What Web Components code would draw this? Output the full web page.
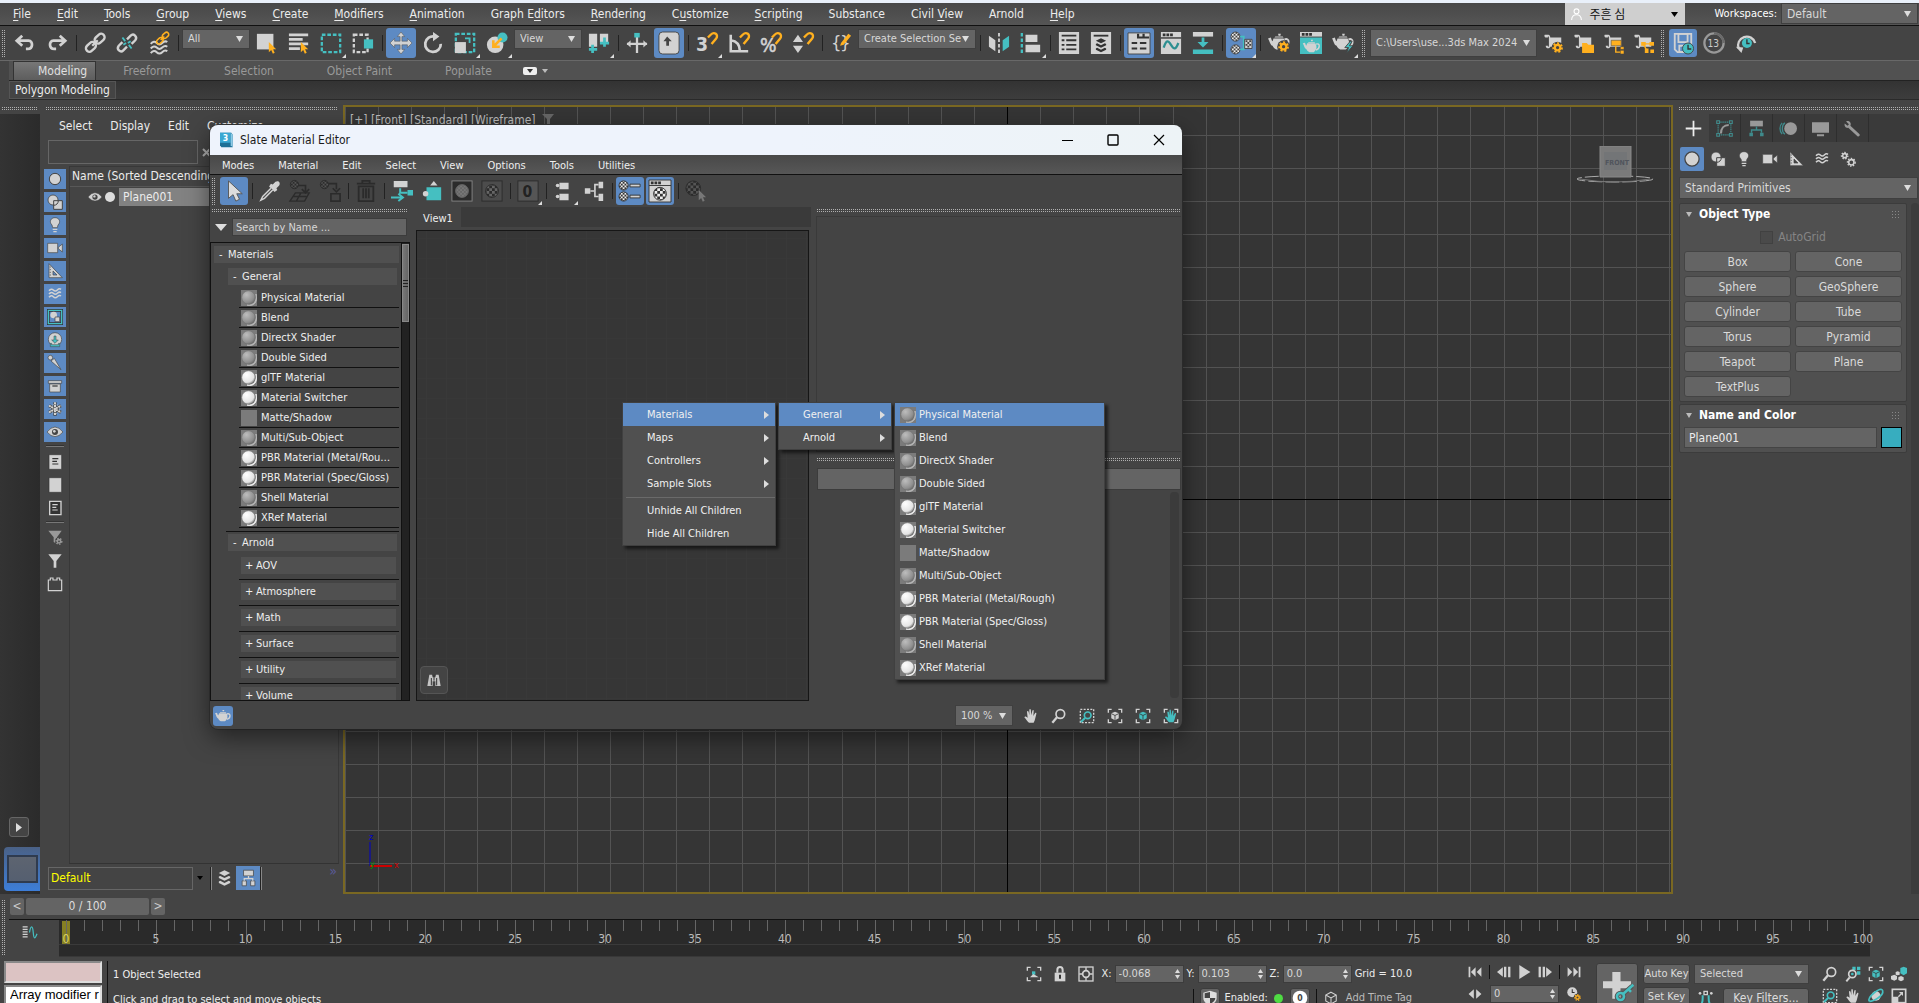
<!DOCTYPE html>
<html lang="en">
<head>
<meta charset="utf-8">
<title>3ds Max 2024</title>
<style>
  html, body { margin: 0; height: 100%; overflow: hidden; background: #444; }
  body {
    font: 12px/16px "DejaVu Sans Condensed", "Noto Sans", "Noto Sans CJK KR", sans-serif;
    color: #ececec;
    --blue: #5d8ac3; --field: #646464;
  }
</style>
</head>
<body>
<max-app></max-app>
<script>
const BASE = `
  *,*::before,*::after{box-sizing:border-box}
  :host{box-sizing:border-box}
  button,input,select{font:inherit;color:inherit;margin:0;padding:0;border:0;background:none;border-radius:0;outline:0;min-width:0}
  button{display:block;text-align:inherit}
  select{appearance:none}
  a{color:inherit;text-decoration:none}
  .dots{height:3px;background:repeating-linear-gradient(transparent 0 1px,#444 1px 2px),repeating-linear-gradient(90deg,#b0b0b0 0 1px,#444 1px 2px)}
`;
function define(tag, css, html) {
  customElements.define(tag, class extends HTMLElement {
    connectedCallback() {
      if (this.shadowRoot) return;
      const root = this.attachShadow({ mode: 'open' });
      root.innerHTML = `<style>${BASE}${css}</style>` + (typeof html === 'function' ? html(this) : html);
    }
  });
}

/* ---------- icons, 24 x 24 ---------- */
const W = '#d2d2d2', T = '#45bfc1', O = '#ffb01f', D = '#333';
const checks = (id, cx, cy, r, a, b, s = 2) =>
  `<defs><pattern id="${id}" width="${2 * s}" height="${2 * s}" patternUnits="userSpaceOnUse"><rect width="${2 * s}" height="${2 * s}" fill="${b}"/><path d="M0 0h${s}v${s}H0zM${s} ${s}h${s}v${s}H${s}z" fill="${a}"/></pattern></defs><circle cx="${cx}" cy="${cy}" r="${r}" fill="url(#${id})" stroke="${b}"/>`;
const gear = (cx, cy, r, c) => `<circle cx="${cx}" cy="${cy}" r="${r}" fill="none" stroke="${c}" stroke-width="2.4"/><circle cx="${cx}" cy="${cy}" r="${r + 1.8}" fill="none" stroke="${c}" stroke-width="2" stroke-dasharray="2.2 2.1"/>`;
const cursor = (x, y, c) => `<path transform="translate(${x} ${y})" d="M0 0v11l2.6-2.4 1.8 4 2-.9-1.8-3.9H8z" fill="${c}"/>`;
const magnet = `<path d="M13 6l3-3c4-4 9 0 6 4l-5 6" fill="none" stroke="${O}" stroke-width="2.6"/>`;
const link = c => `<g fill="none" stroke="${c}" stroke-width="2.6"><rect x="11" y="3.5" width="12" height="7.5" rx="3.7" transform="rotate(-42 17 7.2)"/><rect x="1.5" y="12.5" width="12" height="7.5" rx="3.7" transform="rotate(-42 7.5 16.2)"/><path d="M9 15l6-6"/></g>`;
const pot = (c, s = '') => `<g ${s}><path d="M6 8h11c3 4 2 9-2 12H9c-2-1-3-2-4-4-3-1-3-5-5-8l3-1c1 2 1 4 2 4zM8 6h8l1 1H7zM11 3h3l-.5 2h-2z" fill="${c}"/><path d="M18 9c6-2 6 6 0 8" fill="none" stroke="${c}" stroke-width="2"/></g>`;
const waves = c => `<path d="M3 7q3.5-4 6.5-1t6 0T21 5M3 12q3.5-4 6.5-1t6 0 5.5-1M3 17q3.5-4 6.5-1t6 0 5.5-1" fill="none" stroke="${c}" stroke-width="2.2"/>`;
const layers = c => `<g fill="${c}"><path d="M12 1l8 4-8 4-8-4z"/><path d="M4 10l2-1 6 3 6-3 2 1v2l-8 4-8-4z"/><path d="M4 17l2-1 6 3 6-3 2 1v2l-8 4-8-4z"/></g>`;
const brackets = `<path d="M2 7V2h5M17 2h5v5M22 17v5h-5M7 22H2v-5" fill="none" stroke="${W}" stroke-width="2"/>`;
const hand = c => `<path d="M9 22c-3-2-4-5-7-8 1-2 3-1 5 1L6 6c0-2 2-2 2.5 0l1 5V3c0-2 2-2 2.3 0l.5 8L14 4c.5-1.5 2.3-1 2 .7L15.5 12 18 8c1-1.5 2.5-.5 2 1l-2 8c-.5 2-1 3-2 5z" fill="${c}"/>`;
const cube = (c, k = D) => `<path d="M12 4l7 3v9l-7 4-7-4V7z" fill="${c}"/><path d="M5 7.5l7 3.5 7-3.5M12 11v9" fill="none" stroke="${k}" stroke-width="1.5"/>`;
const scroll = `<path d="M3 3h4c1 0 2 1 2 3H21v10H9c-1 3-5 2-5-1h3V6H4c-1 0-2-2-1-3z" fill="${W}"/><path d="M7 5v11" stroke="#444"/>`;
const ICONS = {
  undo: `<path d="M9 4L3 9.5 9 15M4 9.5h12c5 0 5 9-1 9h-2" fill="none" stroke="${W}" stroke-width="3"/>`,
  redo: `<path d="M15 4l6 5.5-6 5.5M20 9.5H8c-5 0-5 9 1 9h2" fill="none" stroke="${W}" stroke-width="3"/>`,
  link: link(W),
  unlink: `<g fill="none" stroke="${W}" stroke-width="2.6"><path d="M12 8l4-4c3-3 8 1 5 5l-4 4M12 16l-4 4c-3 3-8-1-5-5l4-4"/></g><path d="M7 6l3 4M17 18l-3-4M8 14l3-2M13 12l3-2" stroke="${T}" stroke-width="2"/>`,
  bind: `<g transform="translate(0 6)">${waves(W)}</g><g transform="translate(8 -1) scale(.65)">${link(O)}</g>`,
  select: `<path d="M1 2h18v17H1z" fill="${W}"/>${cursor(14, 11, O)}`,
  selname: `<path d="M1 3h21M1 8h15M1 13h21M1 18h12" stroke="${W}" stroke-width="3"/>${cursor(14, 11, O)}`,
  region: `<rect x="2" y="3" width="20" height="19" fill="none" stroke="${T}" stroke-width="2.5" stroke-dasharray="4 2"/>`,
  crossing: `<rect x="2" y="3" width="15" height="19" fill="none" stroke="${W}" stroke-width="2.5" stroke-dasharray="4 2"/><path d="M13 8h10v10H13z" fill="${T}"/>`,
  move: `<path d="M12 0l4 5h-3v5h6V7l5 5-5 5v-3h-6v5h3l-4 5-4-5h3v-5H5v3l-5-5 5-5v3h6V5H8z" fill="${W}" stroke="#555" stroke-width=".6"/>`,
  rotate: `<path d="M14 5A8.5 8.5 0 1 0 20.5 13" fill="none" stroke="${W}" stroke-width="3"/><path d="M12 0v10l7-5z" fill="${W}"/>`,
  scale: `<rect x="2" y="2" width="20" height="20" fill="none" stroke="${T}" stroke-width="2.5" stroke-dasharray="4 2"/><path d="M1 11h12v12H1z" fill="${W}"/><path d="M12 7h5v5" fill="none" stroke="${T}" stroke-width="2"/>`,
  place: `<circle cx="10" cy="14" r="9" fill="${W}"/><circle cx="18" cy="6" r="5.5" fill="${T}"/><path d="M17 7L9 15M8 9v7h7" fill="none" stroke="${O}" stroke-width="2.8"/>`,
  pivot: `<path d="M1 2h9v14H1zM13 2h9v9h-9z" fill="${W}"/><path d="M5 14v9M1 19h9M18 6v10M13 12h10" stroke="${T}" stroke-width="3"/>`,
  manip: `<path d="M12 5v18M1 13h22" stroke="${W}" stroke-width="2.5"/><path d="M9 1h6v5H9z" fill="${T}"/><path d="M5 9l-4 4 4 4zM19 9l4 4-4 4z" fill="${W}"/>`,
  keyb: `<rect x="1" y="0" width="22" height="24" rx="4" fill="${W}" stroke="#444"/><path d="M10 5l5 5h-3v5H9v-5H6z" fill="#444"/>`,
  snap: `<text x="0" y="21" font-size="21" font-weight="700" fill="${W}">3</text>${magnet}`,
  angle: `<path d="M3 3v18h19M3 9c7 1 10 5 10 12" fill="none" stroke="${W}" stroke-width="2.8"/>${magnet}`,
  percent: `<text x="0" y="22" font-size="21" fill="${W}" stroke="${W}" stroke-width=".6">%</text>${magnet}`,
  spin: `<path d="M1 11l5.5-8 5.5 8zM1 15h11l-5.5 8z" fill="${W}"/>${magnet}`,
  braces: `<text x="1" y="19" font-size="20" fill="${W}">{</text><text x="11" y="19" font-size="20" fill="${W}">}</text><path d="M12 12l8-10 3 2-8 10-4 1z" fill="${O}"/>`,
  mirror: `<path d="M1 4l7 5v12l-7-5z" fill="${W}"/><path d="M23 4l-7 5v12l7-5z" fill="${T}"/><path d="M12 1v22" stroke="${W}" stroke-width="2" stroke-dasharray="4 2"/>`,
  align: `<path d="M2 1v22" stroke="${T}" stroke-width="2.5" stroke-dasharray="4 2"/><path d="M6 3h13v8H6zM6 14h16v8H6z" fill="${W}"/>`,
  list: `<path d="M1 0h22v24H1z" fill="${W}"/><path d="M4 4h16M4 9h3M9 9h11M4 14h3M9 14h11M4 19h3M9 19h11" stroke="${D}" stroke-width="2"/>`,
  layerx: `<path d="M1 0h22v24H1z" fill="${W}"/><path d="M4 4h16" stroke="${D}" stroke-width="2"/><g transform="translate(3.6 6) scale(.7)">${layers(D)}</g>`,
  ribbon: `<path d="M0 1h24v23H0z" fill="${W}" stroke="#444"/><path d="M11 2v4h6V2M17 6h6M4 12h6M13 12h7M4 18h6M13 18h7" stroke="#333" stroke-width="2.4" fill="none"/>`,
  curve: `<path d="M1 0h22v24H1z" fill="${W}"/><path d="M3 1.5h3v3H3zM7 1.5h3v3H7zM11 1.5h3v3h-3z" fill="${D}"/><path d="M1 6.5h22" stroke="${D}" stroke-width="1.5"/><path d="M4 17c3-9 5-8 8-3s5 6 8-2" fill="none" stroke="#2d8f91" stroke-width="2.5"/>`,
  schem: `<path d="M1 0h22v5H1z" fill="${W}"/><path d="M1 19h22v5H1zM10.5 6h3v5H18l-6 6-6-6h4.5z" fill="${T}"/>`,
  slate: checks('a', 6, 5, 5, '#eee', '#444') + checks('b', 6, 19, 5, '#eee', '#444') + `<path d="M11 5h4v8h3M11 19h4v-6" fill="none" stroke="${T}" stroke-width="2"/>` + `<path d="M16 8h8v10h-8z" fill="${W}" stroke="#444"/><path d="M17 9h2v2h-2zM21 9h2v2h-2zM19 11h2v2h-2zM17 13h2v2h-2zM21 13h2v2h-2zM19 15h2v2h-2z" fill="#444"/>`,
  rsetup: pot(W, 'transform="translate(0 -1)"') + `<circle cx="17" cy="16" r="7" fill="#444"/>` + gear(17, 16, 3, O),
  rframe: `<path d="M0 0h24v5H0z" fill="${W}"/><path d="M2 1h3v3H2zM6 1h3v3H6zM10 1h3v3h-3z" fill="${D}"/><path d="M0 6h24v18H0z" fill="${T}"/>` + pot(W, 'transform="translate(3 6) scale(.8)"'),
  render: pot(W, 'transform="translate(0 -1)"') + `<path d="M20 10l-6 7h4l-2 6 7-8h-4l3-5z" fill="${T}" stroke="#444" stroke-width="1"/>`,
  s1: scroll + `<circle cx="17" cy="17" r="6.5" fill="#444"/>` + gear(17, 17, 3, O),
  s2: scroll + `<path d="M11 12h5l2 2h6v9H11z" fill="${O}"/>`,
  s3: scroll + `<path d="M10 9h11v6H10zM20 16h4v3h-4zM20 20h4v4h-4z" fill="${O}" stroke="#444" stroke-width=".6"/><path d="M15 15v7h5" fill="none" stroke="${O}" stroke-width="1.5"/>`,
  s4: scroll + `<path d="M10 11h5v4h-5zM19 11h5v4h-5zM14 18h4v5h-4zM20 19h4v4h-4z" fill="${O}"/><path d="M14 13h6M13 14l3 6" stroke="${O}" stroke-width="1.5"/>`,
  autosave: `<path d="M3 2h18v20H6l-3-3z" fill="none" stroke="${W}" stroke-width="2"/><path d="M7 2h10v9H7zM8 15h8v7H8z" fill="none" stroke="${W}" stroke-width="2"/><circle cx="17.5" cy="18" r="6" fill="${T}" stroke="#444"/><path d="M17.5 14v4.5H21" fill="none" stroke="#333" stroke-width="1.5"/>`,
  ring: `<circle cx="12" cy="12" r="10.5" fill="none" stroke="#999" stroke-width="2.5"/><path d="M12 1.5a10.5 10.5 0 0 1 10.5 10.5" stroke="#6a6a6a" fill="none" stroke-width="2.5"/><text x="5" y="16" font-size="11" fill="#ccc">13</text>`,
  restore: `<path d="M4 18A9.5 9.5 0 1 1 22 12" fill="none" stroke="${W}" stroke-width="2.5"/><path d="M1 16l8 1-2 6z" fill="${W}"/><circle cx="13" cy="12" r="5.5" fill="${T}"/><path d="M13 8v4.5h3" fill="none" stroke="#333" stroke-width="1.5"/>`,
  user: `<circle cx="12" cy="7" r="4.5" fill="none" stroke="#fff" stroke-width="2"/><path d="M3 23c0-13 18-13 18 0" fill="none" stroke="#fff" stroke-width="2"/>`,
  circle: `<circle cx="12" cy="12" r="8.5" fill="${W}" stroke="#444" stroke-width="1.5"/>`,
  shapes: `<circle cx="9" cy="9" r="7.5" fill="${W}" stroke="#444" stroke-width="1.2"/><path d="M10 10h13v13H10z" fill="${W}" stroke="#444" stroke-width="1.5"/><path d="M10 17c4 0 7-3 7-7" stroke="#444" stroke-width="1.5" fill="none"/>`,
  bulb: `<path d="M12 1c7 0 9 7 4.5 11l-1 4h-7l-1-4C3 8 5 1 12 1z" fill="${W}" stroke="#444"/><path d="M8.5 18.5h7M9.5 22h5" stroke="${W}" stroke-width="2"/>`,
  camera: `<path d="M1 5h15v14H1zM17 11l6-5v12l-6-5z" fill="${W}" stroke="#444"/>`,
  tape: `<path d="M3 1l20 21H3zM9 12v6h6z" fill="${W}" fill-rule="evenodd" stroke="#444"/><path d="M4 6h2M4 10h2M4 14h2M4 18h2" stroke="#444"/>`,
  waves: waves(W),
  group: `<path d="M2 2h20v20H2z" fill="none" stroke="#333" stroke-width="4"/><path d="M2 2h20v20H2z" fill="none" stroke="${T}" stroke-width="2"/><circle cx="10" cy="9" r="5" fill="${W}"/><path d="M12 12h7v7h-7z" fill="${W}" stroke="#444"/>`,
  xref: `<circle cx="12" cy="11" r="10" fill="${W}" stroke="#444"/><path d="M10.5 6h3v6H17l-5 5-5-5h3.5zM5 17v5h14v-5h-2v2H7v-2z" fill="${T}" stroke="#444" stroke-width=".8"/>`,
  bone: `<circle cx="5" cy="4" r="3.5" fill="${W}" stroke="#444"/><path d="M6 9l5-4 10 17z" fill="${W}" stroke="#444"/>`,
  box: `<path d="M2 4h20v4H2zM4 9h16v12H4z" fill="${W}" stroke="#444"/><path d="M8 12h8" stroke="#444" stroke-width="2"/>`,
  frozen: `<g stroke="#444" stroke-width="5"><path d="M12 2v20M3 7l18 10M3 17L21 7"/></g><g stroke="${W}" stroke-width="3" stroke-dasharray="3 1"><path d="M12 2v20M3 7l18 10M3 17L21 7"/></g><circle cx="12" cy="12" r="7" fill="none" stroke="${W}" stroke-dasharray="2 1.5"/>`,
  eye: `<path d="M0 12q12-15 24 0-12 14-24 0z" fill="${W}" stroke="#444"/><circle cx="12" cy="12" r="4.5" fill="#444"/><circle cx="11" cy="11" r="2" fill="${W}"/>`,
  page: `<path d="M3 1h19v22H3z" fill="${W}" stroke="#333"/><path d="M8 7h9M8 11h7M8 15h9" stroke="${D}" stroke-width="1.8"/>`,
  page0: `<path d="M3 1h19v22H3z" fill="${W}" stroke="#333"/>`,
  page1: `<path d="M4 2h17v20H4z" fill="#333" stroke="${W}" stroke-width="2"/><path d="M8 7h8M8 11h6M8 15h8" stroke="${W}" stroke-width="1.8"/>`,
  filterg: `<path d="M2 1h20l-7 10v10l-5-3v-7z" fill="#999"/><circle cx="18" cy="17" r="6" fill="#444"/>` + gear(18, 17, 2.5, '#999'),
  filter: `<path d="M2 2h20l-8 10v10h-4V12z" fill="${W}"/>`,
  brick: `<path d="M2 6h3V3h4v3h6V3h4v3h3v16H2z" fill="none" stroke="${W}" stroke-width="1.8"/>`,
  layers: layers(W),
  hier: `<path d="M5 1h14v8H5zM3 16h6v7H3zM15 16h6v7h-6z" fill="${W}" stroke="#444"/><path d="M12 9v4M6 16v-3h12v3" fill="none" stroke="${W}" stroke-width="1.8"/>`,
  logo: `<path d="M3 1h17l2 3v19H5l-2-3z" fill="#1d6f96"/><path d="M3 1h16v15H3z" fill="#3aa7d2"/><path d="M19 1l3 3v19l-3-3z" fill="#8ecae6"/><text x="7" y="14" font-size="13" font-weight="700" fill="#fff">3</text>`,
  min: `<path d="M7 12.5h11" stroke="#000" stroke-width="1.2"/>`,
  max: `<rect x="7" y="7" width="10" height="10" rx="1" fill="none" stroke="#000" stroke-width="1.4"/>`,
  close: `<path d="M7 7l10 10M17 7L7 17" stroke="#000" stroke-width="1.2"/>`,
  arrow: `<path d="M6 1v19l5-4 3 7 4-2-3-6h6z" fill="#ddd" stroke="#555"/>`,
  dropper: `<path d="M15 5l3-3c3-2 6 1 4 4l-3 3 1 2-3 2-6-6 2-3z" fill="${W}"/><path d="M13 9l-9 9-2 4 4-2 9-9" fill="#555" stroke="${W}" stroke-width="1.5"/>`,
  put: checks('a', 6, 5, 4.5, '#555', '#2b2b2b') + `<path d="M11 6h7v7M14 10l4 4 4-4" fill="none" stroke="#2b2b2b" stroke-width="1.8"/><path d="M7 14h15l-5 9H1zM5 18h14M13 14l-5 9" fill="none" stroke="#2b2b2b" stroke-width="1.5"/>`,
  assign: checks('a', 6, 5, 4.5, '#555', '#2b2b2b') + `<path d="M11 4h8v6M15 9l4 4 4-4M13 15h10v8H13z" fill="none" stroke="#2b2b2b" stroke-width="1.8"/>`,
  trash: `<path d="M2 4h20M8 4V1h8v3M4 7h16v16H4zM9 9v11M12 9v11M15 9v11" fill="none" stroke="#2b2b2b" stroke-width="2"/>`,
  moveKids: `<path d="M3 1h15v7H3z" fill="${W}"/><path d="M18 11h6v6h-6z" fill="${T}"/><path d="M10 9v5h8M0 19h11M8 15l5 4-5 4" fill="none" stroke="${T}" stroke-width="2.2"/>`,
  hide: `<path d="M6 8h16v14H6z" fill="${T}"/><path d="M10 6l4-5 4 5z" fill="${W}"/><circle cx="5" cy="15" r="3" fill="${W}"/>`,
  shade: `<rect x="1" y="1" width="22" height="22" fill="#2b2b2b" stroke="#888"/>` + checks('a', 12, 12, 7, '#777', '#666'),
  bg: `<rect x="1" y="1" width="22" height="22" fill="#4c4c4c" stroke="#2b2b2b"/>` + checks('a', 12, 12, 7, '#666', '#2b2b2b', 3),
  zero: `<rect x="1" y="1" width="22" height="22" fill="#555" stroke="#2b2b2b"/><text x="6" y="18" font-size="17" font-weight="700" fill="#222">0</text>`,
  layAll: `<path d="M7 3h10v7H7zM7 15h10v7H7z" fill="${W}"/><circle cx="5" cy="6" r="2" fill="${W}"/><circle cx="5" cy="18" r="2" fill="${W}"/>`,
  layKid: `<path d="M2 9h6v6H2zM17 2h5v7h-5zM17 15h5v8h-5z" fill="${W}"/><path d="M8 12h4M17 5h-4v13h4" fill="none" stroke="${W}" stroke-width="1.8"/>`,
  browser: checks('a', 5, 6, 5, '#eee', '#333') + checks('b', 5, 18, 5, '#eee', '#333') + `<path d="M12 4.5h11v3H12zM12 16.5h11v3H12z" fill="${W}" stroke="#333"/>`,
  editor: `<path d="M0 0h24v24H0z" fill="${W}" stroke="#333"/><path d="M0 6h24" stroke="#333"/><path d="M2 1.5h3v3H2zM6 1.5h3v3H6zM10 1.5h3v3h-3z" fill="#333"/>` + checks('a', 12, 15, 7, '#eee', '#333', 3),
  pick: checks('a', 9, 9, 8, '#555', '#2b2b2b', 3) + cursor(15, 11, '#777'),
  binoc: `<path d="M5 4h4l1 4h4l1-4h4l3 17h-8v-7h-4v7H2z" fill="#c4c4c4"/><path d="M8 9v11M16 9v11M12 4v9" stroke="#333" stroke-width="1.5"/>`,
  pot: pot(W),
  hand: hand(W),
  zoom: `<circle cx="14" cy="9" r="6.5" fill="none" stroke="${W}" stroke-width="2.5"/><path d="M9 14l-7 8" stroke="${W}" stroke-width="3.5"/>`,
  zregion: `<rect x="2" y="2" width="20" height="20" fill="none" stroke="${W}" stroke-width="2" stroke-dasharray="3 2"/><circle cx="13" cy="11" r="5" fill="#444" stroke="${T}" stroke-width="2.5"/><path d="M9 15l-6 6" stroke="${T}" stroke-width="3"/>`,
  zext: brackets + `<g transform="translate(2.4 2.4) scale(.8)">${cube(W)}</g>`,
  zextsel: brackets + `<g transform="translate(2.4 2.4) scale(.8)">${cube(T)}</g>`,
  panto: brackets + `<g transform="translate(1 1) scale(.92)">${hand(T)}</g>`,
  zall: `<path d="M11 1h5v5h-5zM18 1h5v5h-5zM18 8h5v5h-5z" fill="${T}"/><circle cx="11" cy="12" r="5.5" fill="#444" stroke="${W}" stroke-width="2.5"/><circle cx="11" cy="12" r="2" fill="${T}"/><path d="M7 17l-5 6" stroke="${W}" stroke-width="3"/>`,
  zextall: `<path d="M14 3l5-2 5 2v8l-5 3-5-3z" fill="${T}"/><path d="M0 15l5-2 4 2v5l-4 2-5-2zM11 17l4-2 4 2v4l-4 2-4-2zM7 9l3-1 3 1v4l-3 1-3-1z" fill="${W}"/>`,
  orbit: `<circle cx="12" cy="12" r="7" fill="${W}"/><path d="M2 20C-2 14 20-4 22 4s-14 16-20 16" fill="none" stroke="${T}" stroke-width="2.5"/>`,
  maxv: `<rect x="2" y="2" width="20" height="20" fill="none" stroke="${W}" stroke-width="2.5"/><path d="M2 13h9v9H2zM12 6h6v6z" fill="${W}"/><path d="M17 7l-6 6" stroke="${W}" stroke-width="2"/>`,
  isolate: brackets + `<path d="M9 8h5v5H9z" fill="${T}"/><path d="M6 17l5-5 8 5z" fill="${W}"/>`,
  lock: `<path d="M4 10h16v13H4z" fill="${W}"/><path d="M8 10V6c0-6 8-6 8 0v4" fill="none" stroke="${W}" stroke-width="3"/><path d="M12 13v6" stroke="#333" stroke-width="3"/>`,
  absrel: `<rect x="1.5" y="1.5" width="21" height="21" fill="none" stroke="${W}" stroke-width="2"/><circle cx="12" cy="12" r="5" fill="none" stroke="${W}" stroke-width="2.5"/><path d="M12 2v5M12 17v5M2 12h5M17 12h5" stroke="${W}" stroke-width="2"/>`,
  shield: `<path d="M12 1l10 3v8c0 6-5 9-10 11C7 21 2 18 2 12V4z" fill="#ddd"/><path d="M12 3v9h8c0 4-4 7-8 9v-9H4V5z" fill="#444"/>`,
  oval: `<circle cx="12" cy="12" r="11" fill="#fff"/><text x="8" y="17" font-size="13" font-weight="700" fill="#444">0</text>`,
  cubeo: `<path d="M12 2l9 5v10l-9 5-9-5V7zM3 7l9 5 9-5M12 12v10" fill="none" stroke="${W}" stroke-width="1.8"/>`,
  first: `<path d="M1 3h3v18H1zM13 4v16L5 12zM23 4v16l-8-8z" fill="${W}"/>`,
  prev: `<path d="M10 4v16L0 12zM12 3h4v18h-4zM19 3h4v18h-4z" fill="${W}"/>`,
  play: `<path d="M4 0l19 12L4 24z" fill="${W}"/>`,
  next: `<path d="M14 4v16l10-8zM1 3h4v18H1zM8 3h4v18H8z" fill="${W}"/>`,
  last: `<path d="M20 3h3v18h-3zM11 4v16l8-8zM1 4v16l8-8z" fill="${W}"/>`,
  keymode: `<path d="M10 4v16L1 12zM14 4v16l9-8z" fill="${W}"/>`,
  timecfg: `<circle cx="9" cy="9" r="8.5" fill="${W}"/><path d="M9 4v5.5h4" fill="none" stroke="#333" stroke-width="1.8"/><circle cx="18" cy="18" r="6.5" fill="#444"/>` + gear(18, 18, 3, O),
  setkey: `<path d="M8 0h7v8h9v6h-9v9H8v-9H0V8h8z" fill="${W}"/><g fill="none" stroke="#555" stroke-width="4"><circle cx="15" cy="21" r="3"/><path d="M17 19l8-7"/></g><g fill="none" stroke="${T}" stroke-width="2.2"><circle cx="15" cy="21" r="3"/><path d="M17 19l9-8M22 15l2 2"/></g>`,
  tangent: `<path d="M9 2h5v5H9z" fill="none" stroke="${W}" stroke-width="2"/><circle cx="3" cy="5" r="2" fill="${W}"/><circle cx="20" cy="5" r="2" fill="${W}"/><path d="M3 24C8 20 7 12 7 8M20 24c-5-4-4-12-4-16" fill="none" stroke="${T}" stroke-width="3"/>`,
  minicurve: `<path d="M1 3h8M1 7h8M1 11h8M1 15h8M1 19h8" stroke="${W}" stroke-width="2"/><path d="M12 12c2-12 5-12 6 0s3 10 6 2" fill="none" stroke="${T}" stroke-width="2"/>`,
  plus: `<path d="M12 1v22M1 12h22" stroke="#eee" stroke-width="2.5"/>`,
  modify: `<path d="M3 3h18v18H3z" fill="none" stroke="#3f8a8b" stroke-width="1.5" stroke-dasharray="2 1"/><path d="M1 1h4v4H1zM19 1h4v4h-4zM1 19h4v4H1zM19 19h4v4h-4z" fill="#444" stroke="#3f8a8b" stroke-width="1.5"/><path d="M7 19C7 12 11 7 18 7" fill="none" stroke="#999" stroke-width="3"/>`,
  hierp: `<path d="M3 1h18v8H3z" fill="#999"/><path d="M12 9v5M5 18v-4h14v4" fill="none" stroke="#3f8a8b" stroke-width="2"/><path d="M2 18h5v5H2zM17 18h5v5h-5z" fill="#3f8a8b"/>`,
  motion: `<circle cx="15" cy="12" r="9" fill="#999"/><path d="M7 4c-5 3-5 13 0 16M3 4c-4 4-4 12 0 16" fill="none" stroke="#3f8a8b" stroke-width="1.8"/>`,
  display: `<path d="M0 3h24v15H0zM7 20h10v3H7z" fill="#999"/>`,
  wrench: `<path d="M3 2c4-2 8 2 6 6l13 12c1 2-1 4-3 3L6 11C3 12 0 9 1 5l4 3 2-2z" fill="#999"/>`,
  gears: gear(7, 7, 3, W) + gear(17, 17, 4, W),
};
define('ui-icon', `:host{display:block;width:22px;height:22px;flex:none}svg{display:block;width:100%;height:100%;overflow:visible}`,
  el => `<svg viewBox="0 0 24 24" aria-hidden="true">${ICONS[el.getAttribute('name')] || ''}</svg>`);

define('mat-ball', `:host{display:block;width:16px;height:16px;background:#7b7b7b;flex:none}svg{display:block}`,
  el => {
    const k = el.getAttribute('kind');
    if (k === 'flat') return '';
    const c = k === 'bright' ? ['#fff', '#e4e4e4', '#eee'] : ['#bdbdbd', '#8f8f8f', '#b5b5b5'];
    return `<svg viewBox="0 0 16 16" width="16" height="16"><defs><radialGradient id="g" cx=".35" cy=".3" r=".8"><stop offset="0" stop-color="${c[0]}"/><stop offset=".7" stop-color="${c[1]}"/><stop offset="1" stop-color="#666"/></radialGradient></defs><path d="M6 15C13 16 16 11 15 4c2 8-2 13-9 11z" fill="${c[2]}" stroke="${c[2]}"/><circle cx="7.5" cy="7.5" r="6.7" fill="url(#g)" stroke="#6c6c6c" stroke-width=".5"/></svg>`;
  });

/* ---------- small controls ---------- */
define('tool-button', `
  :host{display:block;flex:none;width:30px}
  :host([small]){width:28px}
  :host([tiny]){width:20px}
  button{position:relative;width:100%;height:30px;border-radius:3px;display:grid;place-items:center}
  :host([small]) button{height:28px}
  :host([tiny]) button{height:20px}
  :host([tiny]) ui-icon{width:16px;height:16px}
  :host([on]) button{background:var(--blue)}
  i{position:absolute;right:0;bottom:0;border:2px solid transparent;border-right-color:#ddd;border-bottom-color:#ddd}`,
  el => `<button type="button" aria-label="${el.getAttribute('icon')}"><ui-icon name="${el.getAttribute('icon')}"></ui-icon>${el.hasAttribute('fly') ? '<i></i>' : ''}</button>`);

define('tool-sep', `:host{display:block;width:4px;height:16px;flex:none;border-left:2px solid transparent;background:linear-gradient(90deg,#222 1px,transparent 1px) padding-box}
  :host([grip]){width:8px;height:27px;border:0;padding:0 3px 0 2px;background:none}
  :host([grip]) .dots{height:100%}`, el => el.hasAttribute('grip') ? '<div class="dots"></div>' : '');

define('drop-down', `
  :host{display:grid;align-items:center;height:20px;background:var(--field);color:#d8d8d8;border:1px solid #3f3f3f;flex:none;min-width:0}
  select{grid-area:1/1;width:100%;height:100%;padding:0 14px 0 5px;text-overflow:clip}
  svg{grid-area:1/1;justify-self:end;margin-right:6px;width:7px;height:6px;pointer-events:none}`,
  el => `<select aria-label="${el.getAttribute('label') || ''}"><option>${el.getAttribute('value')}</option></select><svg viewBox="0 0 7 6"><path d="M0 0h7L3.5 6z" fill="#ddd"/></svg>`);

define('menu-strip', `
  :host{display:block}
  nav{display:flex;align-items:center;height:100%}
  a{white-space:nowrap;padding:0 var(--pad,13px)} u{text-underline-offset:2px}`,
  el => `<nav>${el.getAttribute('items').split('|').map(t => `<a href="#">${t.replace(/_(.)/, '<u>$1</u>')}</a>`).join('')}</nav>`);

define('spin-field', `
  :host{display:flex;align-items:center;gap:3px;flex:none}
  .f{display:grid;width:69px;height:18px;align-items:center;background:var(--field);border:1px solid #3c3c3c}
  input{grid-area:1/1;width:100%;padding-left:3px;color:#d8d8d8}
  svg{grid-area:1/1;justify-self:end;margin-right:3px}`,
  el => `${el.hasAttribute('label') ? `<label for="v">${el.getAttribute('label')}</label>` : ''}<span class="f"><input id="v" value="${el.getAttribute('value')}" aria-label="${el.getAttribute('label') || 'Frame'}"><svg width="5" height="10" viewBox="0 0 5 10"><path d="M0 4h5L2.5 0zM0 6h5L2.5 10z" fill="#ddd"/></svg></span>`);

/* ---------- top of the window ---------- */
define('app-header', `
  :host{display:block}
  .edge{height:3px;background:#e9f0fa}
  .bar{display:flex;align-items:stretch;height:23px;background:linear-gradient(#484848,#555);border-bottom:1px solid #111}
  menu-strip{flex:1}
  .user{display:flex;align-items:center;gap:6px;width:120px;padding:0 7px 0 5px;background:#cfcfcf;color:#111;font-family:"Noto Sans CJK KR",sans-serif}
  .user ui-icon{width:13px;height:14px}
  .user span{flex:1}
  .user svg{width:7px;height:5px}
  .ws{align-self:center;margin:0 4px 0 29px;color:#fff;font-size:11px}
  drop-down{width:137px;height:21px;margin-right:1px}`,
  `<div class="edge"></div><div class="bar">
   <menu-strip items="_File|_Edit|_Tools|_Group|_Views|_Create|_Modifiers|_Animation|Graph E_ditors|_Rendering|C_ustomize|_Scripting|Substance|Civil _View|Arnold|_Help"></menu-strip>
   <button class="user" type="button"><ui-icon name="user"></ui-icon><span>주흔 심</span><svg viewBox="0 0 7 5"><path d="M0 0h7L3.5 5z"/></svg></button>
   <span class="ws">Workspaces:</span><drop-down label="Workspaces" value="Default"></drop-down></div>`);

define('main-toolbar', `
  :host{display:flex;align-items:center;gap:2px;height:34px;background:#444}
  drop-down{font-size:11px;width:68px;align-self:flex-start;margin-top:3px}
  .set{width:118px}.path{width:167px;height:28px;margin:0;align-self:center}`,
  `<tool-sep grip></tool-sep>` + [
    'undo', 'redo', '-', 'link', 'unlink', 'bind', '-', '<drop-down label="Selection filter" value="All"></drop-down>', 'select', 'selname', 'region^', 'crossing', '-',
    'move*', 'rotate', 'scale^', 'place^', '<drop-down label="Reference coordinate system" value="View"></drop-down>', 'pivot^', '-', 'manip', 'keyb*', '-', 'snap^', 'angle', 'percent', 'spin', '-', 'braces',
    '<drop-down class="set" label="Named selection sets" value="Create Selection Set"></drop-down>', '-', 'mirror', 'align^', '-', 'list', 'layerx', '-', 'ribbon*', 'curve', 'schem', '-', 'slate*^', '-', 'rsetup', 'rframe', 'render^', '=',
    '<drop-down class="path" label="Project folder" value="C:\\Users\\use...3ds Max 2024"></drop-down>', 's1~', 's2~', 's3~', 's4~', '=', 'autosave*~', 'ring', 'restore'
  ].map(t => t[0] === '<' ? t : t === '-' ? '<tool-sep></tool-sep>' : t === '=' ? '<tool-sep grip></tool-sep>' :
    `<tool-button icon="${t.replace(/[*^~]/g, '')}"${t.includes('*') ? ' on' : ''}${t.includes('^') ? ' fly' : ''}${t.includes('~') ? ' small' : ''}></tool-button>`).join(''));

define('ribbon-bar', `
  :host{display:block;border-top:1px solid #686868;padding-left:9px}
  .tabs{display:flex;height:19px;background:#515151;padding-left:4px;align-items:center;color:#999}
  .tabs button{padding:0 26px 0 27px;height:100%;line-height:18px}
  .tabs button:first-child{background:linear-gradient(#777,#5d5d5d);color:#e0e0e0;border:1px solid #333;border-bottom:0;padding:0 8px 0 24px}
  .pill{width:14px;height:8px;border-radius:2px;background:#eee;display:grid;place-items:center;margin:0 5px}
  .row{height:20px;background:linear-gradient(#333,#3d3d3d);border-top:1px solid #222;border-bottom:1px solid #2a2a2a}
  .row button{height:18px;padding:0 5px;border:1px solid #555;background:#444;line-height:16px}`,
  `<div class="tabs"><button>Modeling</button><button>Freeform</button><button>Selection</button><button>Object Paint</button><button>Populate</button>
   <span class="pill"><svg width="6" height="4"><path d="M0 0h6L3 4z" fill="#333"/></svg></span><svg width="6" height="4"><path d="M0 0h6L3 4z" fill="#bbb"/></svg></div>
   <div class="row"><button>Polygon Modeling</button></div>`);

/* ---------- left side ---------- */
define('layout-strip', `
  :host{display:flex;flex-direction:column;width:40px;padding-top:7px;background:#444}
  .dots{margin:0 3px 4px 2px}
  .col{flex:1;background:linear-gradient(90deg,#333,#2b2b2b);display:flex;flex-direction:column;justify-content:flex-end;align-items:flex-end;padding-bottom:3px}
  .more{width:20px;height:20px;margin:0 11px 10px 0;border-radius:3px;border:1px solid #666;background:#444;display:grid;place-items:center}
  .tab{width:36px;height:44px;border-radius:4px 0 0 4px;background:linear-gradient(#4a6186,#3d7ed8);padding:7px 2px 7px 3px}
  .tab span{display:block;height:28px;border:2px solid #2f3b4f;background:linear-gradient(#5d6470,#555f70)}`,
  `<div class="dots"></div><div class="col"><button class="more" aria-label="More layouts"><svg width="6" height="9"><path d="M0 0l6 4.5L0 9z" fill="#ddd"/></svg></button><button class="tab" aria-label="Layout"><span></span></button></div>`);

define('scene-explorer', `
  :host{display:flex;flex-direction:column;width:302px;padding:7px 3px 2px 4px;background:#444}
  .dots{margin:0 2px 8px 2px}
  menu-strip{height:16px;--pad:9px;margin-left:6px}
  .find{display:flex;align-items:center;gap:4px;height:24px;margin:6px 0 2px 4px}
  .find input{width:150px;height:24px;border:1px solid #666;padding:0 4px}
  .body{flex:1;display:flex;gap:3px;min-height:0}
  .cats{display:flex;flex-direction:column;gap:3px;width:22px;align-items:center;padding-top:3px}
  .cats button{width:22px;height:20px;display:grid;place-items:center}
  .cats button.on{background:var(--blue)}
  .cats ui-icon{width:16px;height:16px}
  hr{width:18px;height:2px;margin:0 0 2px;border:0;background:#777;border-top:1px solid #333}
  .list{flex:1;border:1px solid #383838;border-bottom-color:#333}
  .head{height:20px;line-height:19px;padding-left:2px;border-bottom:1px solid #585858;white-space:nowrap}
  .row{display:flex;align-items:center;height:18px;margin-top:1px;padding-left:18px;gap:3px}
  .row ui-icon{width:14px;height:14px}
  .row b{font-weight:400;flex:1;height:18px;line-height:19px;background:#828282;padding-left:4px;margin-left:1px}
  .dot{width:10px;height:10px;border-radius:50%;background:#ddd}
  .foot{display:flex;align-items:center;height:28px;padding-left:4px}
  .combo{width:145px;height:23px;border:1px solid #666;color:#ff0;padding:0 2px}
  .arr{margin:0 7px 0 4px}
  .foot i{width:2px;height:23px;background:linear-gradient(90deg,#222 50%,#888 50%)}
  .foot .on{background:var(--blue)} .foot button{width:24px;height:24px;display:grid;place-items:center}
  .foot ui-icon{width:17px;height:18px}
  .foot span{margin-left:auto;margin-right:2px;align-self:flex-start;line-height:14px;color:#5a5a9a;font-size:14px}`,
  `<div class="dots"></div><menu-strip items="Select|Display|Edit|Customize"></menu-strip>
   <div class="find"><input aria-label="Find"><svg width="9" height="9"><path d="M1 1l7 7M8 1L1 8" stroke="#aaa" stroke-width="2"/></svg></div>
   <div class="body"><div class="cats">${['circle', 'shapes', 'bulb', 'camera', 'tape', 'waves', 'group', 'xref', 'bone', 'box', 'frozen', 'eye'].map(n => `<button class="on" aria-label="${n}"><ui-icon name="${n}"></ui-icon></button>`).join('')}
   <hr>${['page', 'page0', 'page1'].map(n => `<button aria-label="${n}"><ui-icon name="${n}"></ui-icon></button>`).join('')}<hr>
   ${['filterg', 'filter', 'brick'].map(n => `<button aria-label="${n}"><ui-icon name="${n}"></ui-icon></button>`).join('')}</div>
   <div class="list"><div class="head">Name (Sorted Descending)</div><div class="row"><ui-icon name="eye"></ui-icon><span class="dot"></span><b>Plane001</b></div></div></div>
   <div class="foot"><input class="combo" value="Default" aria-label="Explorer name"><svg class="arr" width="6" height="4"><path d="M0 0h6L3 4z" fill="#000"/></svg><i></i>
   <button aria-label="Layers"><ui-icon name="layers"></ui-icon></button><button class="on" aria-label="Hierarchy"><ui-icon name="hier"></ui-icon></button><i></i><span>»</span></div>`);

/* ---------- viewport ---------- */
define('view-port', `
  :host{display:block;position:relative;flex:1;margin-top:5px;border:2px solid #7a6822;background:#353535;overflow:hidden;min-width:0}
  .grid{position:absolute;left:50%;top:50%;overflow:visible;width:1px;height:1px}
  .label{position:relative;margin:5px 0 0 5px;color:#bbb;white-space:nowrap;display:flex;align-items:center;gap:6px}
  .axis{position:absolute;left:18px;bottom:18px;overflow:visible}
  .cube{position:absolute;right:17px;top:39px}`,
  () => {
    let p = '';
    for (let i = -40; i <= 40; i++) if (i) { const d = Math.round(i * 33.1); p += `M${d} -900v1800M-1400 ${d}h2800`; }
    return `<svg class="grid"><g shape-rendering="crispEdges" fill="none" transform="translate(-1 -1)"><path d="${p}" stroke="#535353"/><path d="M0 -900v1800M-1400 0h2800" stroke="#000"/></g></svg>
    <div class="label">[+] [Front] [Standard] [Wireframe]<svg width="12" height="12"><path d="M0 0h12L8 5v7H5V5z" fill="#666"/></svg></div>
    <svg class="cube" width="80" height="44" viewBox="0 0 80 44"><ellipse cx="41" cy="33" rx="38" ry="3" fill="none" stroke="#aaa" stroke-dasharray="14 3"/><path d="M26 0h31v31H26z" fill="#7a7a7a" stroke="#888"/><path d="M30 6h23v18H30z" fill="#737577"/><text x="31" y="19" font-size="7" font-weight="700" fill="#50545c">FRONT</text><path d="M6 33q35 6 70 0" fill="none" stroke="#777"/></svg>
    <svg class="axis" width="40" height="34"><path d="M7 26V2" stroke="#00c"/><path d="M7 26h22" stroke="#c00" stroke-width="2"/><text x="6" y="0" font-size="9" fill="#00c">z</text><text x="7" y="27" font-size="9" fill="#090">y</text><text x="31" y="28" font-size="9" fill="#c00">x</text></svg>`;
  });

/* ---------- command panel ---------- */
define('roll-out', `
  :host{display:block;background:#505050;border:1px solid #3c3c3c;border-radius:2px;padding:0 4px 4px}
  h3{display:flex;align-items:center;height:20px;margin:0;padding:0 3px 0 2px;font-size:12px;font-weight:700;color:#fff}
  h3 span{flex:1;padding-left:7px}
  .g{width:7px;height:7px;background:linear-gradient(90deg,#888 1px,transparent 1px) 0 0/3px 3px;-webkit-mask:linear-gradient(#000 1px,transparent 1px) 0 0/3px 3px}`,
  el => `<h3><svg width="6" height="5"><path d="M0 0h6L3 5z" fill="#bbb"/></svg><span>${el.getAttribute('heading')}</span><i class="g"></i></h3><slot></slot>`);

define('command-panel', `
  :host{display:flex;flex-direction:column;width:245px;padding-top:7px;background:#444}
  .dots{margin:0 1px 4px 5px}
  .tabs{display:flex;height:28px;margin-left:4px;background:#3a3a3a}
  .tabs button{width:32px;display:grid;place-items:center;border-right:1px solid #2e2e2e}
  .tabs button.on{width:31px;background:#444;border:0}
  .tabs ui-icon{width:17px;height:17px}
  .cats{display:flex;gap:2px;padding:5px 6px;height:34px}
  .cats button{width:24px;height:24px;display:grid;place-items:center;border-radius:2px}
  .cats .on{background:var(--blue)} .cats ui-icon{width:16px;height:16px} .cats .on ui-icon{width:20px;height:20px}
  drop-down{height:22px;margin:1px 1px 4px 5px}
  .scroll{flex:1;display:flex;gap:4px;padding-left:5px}
  .rolls{flex:1;display:flex;flex-direction:column;gap:2px}
  .bar{width:8px;background:#3c3c3c;border-radius:4px 4px 0 0}
  .auto{display:flex;justify-content:center;align-items:center;gap:5px;height:22px;margin:2px 0 3px;color:#858585}
  .auto input{appearance:none;width:13px;height:13px;background:#4a4a4a;border:1px solid #414141}
  .grid{display:grid;grid-template-columns:1fr 1fr;gap:4px}
  .grid button{height:21px;border-radius:3px;background:var(--field);border:1px solid #444;text-align:center;color:#dadada}
  .name{display:flex;gap:4px;margin-top:2px}
  .name input[type=text]{flex:1;height:21px;background:var(--field);border:1px solid #444;padding-left:4px}
  .name button{width:21px;height:21px;background:#37adbf;border:1px solid #000}`,
  `<div class="dots"></div>
   <div class="tabs">${['plus', 'modify', 'hierp', 'motion', 'display', 'wrench'].map((n, i) => `<button${i ? '' : ' class="on"'} aria-label="${n}"><ui-icon name="${n}"></ui-icon></button>`).join('')}</div>
   <div class="cats">${['circle', 'shapes', 'bulb', 'camera', 'tape', 'waves', 'gears'].map((n, i) => `<button${i ? '' : ' class="on"'} aria-label="${n}"><ui-icon name="${n}"></ui-icon></button>`).join('')}</div>
   <drop-down label="Category" value="Standard Primitives"></drop-down>
   <div class="scroll"><div class="rolls">
   <roll-out heading="Object Type"><label class="auto"><input type="checkbox" disabled>AutoGrid</label><div class="grid">${['Box', 'Cone', 'Sphere', 'GeoSphere', 'Cylinder', 'Tube', 'Torus', 'Pyramid', 'Teapot', 'Plane', 'TextPlus'].map(n => `<button>${n}</button>`).join('')}</div></roll-out>
   <roll-out heading="Name and Color"><div class="name"><input type="text" value="Plane001" aria-label="Name"><button aria-label="Object color"></button></div></roll-out>
   </div><div class="bar"></div></div>`);

/* ---------- bottom ---------- */
define('time-line', `
  :host{display:flex;background:#444;height:63px;padding:4px 0 0 2px;gap:4px}
  .grip{width:3px;height:55px;margin-top:2px}
  .main{flex:1}
  .slider{display:flex;gap:2px;height:21px;padding-left:1px}
  .slider button{height:17px;border-radius:2px;background:var(--field);width:14px;text-align:center;color:#ccc;line-height:17px}
  .slider .h{width:123px;color:#ddd}
  .track{display:flex;border-top:1px solid #111}
  .curve{width:50px;padding:5px 0 0 13px} .curve ui-icon{width:15px;height:15px}
  .ruler{position:relative;flex:1;height:37px;margin-right:49px;padding:0 6px 0 7px;background:#2a2a2a;border-bottom:1px solid #383838}
  .ticks{display:flex;justify-content:space-between;height:25px;border-bottom:1px solid #3a3a3a;margin:0 -6px 0 -7px;padding:0 6px 0 7px}
  .ticks i{width:1px;height:11px;background:#666;position:relative;font-style:normal}
  .ticks i.m{height:24px}
  .ticks span{position:absolute;left:-15px;width:30px;top:11px;text-align:center;color:#bbb}
  .cur{position:absolute;left:3px;top:1px;width:8px;height:23px;background:#857f23}
  .ticks i:first-child span{color:#d8d060}`,
  () => {
    let t = '';
    for (let i = 0; i <= 100; i++) t += i % 5 ? '<i></i>' : `<i class="m"><span>${i}</span></i>`;
    return `<div class="grip dots"></div><div class="main"><div class="slider"><button aria-label="Previous">&lt;</button><button class="h">0 / 100</button><button aria-label="Next">&gt;</button></div>
    <div class="track"><div class="curve"><ui-icon name="minicurve"></ui-icon></div><div class="ruler"><div class="cur"></div><div class="ticks">${t}</div></div></div></div>`;
  });

define('status-bar', `
  :host{display:flex;height:46px;overflow:hidden;background:#444;padding-right:9px;font-size:11px}
  .mini{width:98px;margin-left:4px;flex:none;padding-top:4px}
  .mini input{display:block;width:100%;height:22px;border:2px inset #ddd;background:#dcc3c3}
  .mini input+input{height:24px;background:#fff;color:#000;font:13px/16px "Liberation Sans",sans-serif;padding:0 0 5px 4px;margin-top:2px}
  .sep{width:1px;align-self:stretch;background:#111;flex:none}
  .mini+.sep{margin:4px 0 0 5px}
  .msg{flex:1;padding:10px 0 0 5px;display:flex;flex-direction:column;gap:9px;color:#f0f0f0;white-space:nowrap}
  .col{display:flex;flex-direction:column;gap:6px;padding-top:8px;align-items:flex-end;flex:none}
  .r{display:flex;align-items:center;height:18px;gap:3px;white-space:nowrap}
  .r ui-icon{width:16px;height:16px}
  .r [name=lock]{margin:0 7px}
  .r [name=absrel]{margin-right:4px}
  .r [name=cubeo]{margin:0 5px 0 2px;width:14px;height:14px}
  .r .sep{margin:0 2px}
  .tag{color:#bbb}
  .btn{background:var(--field);border-radius:3px;text-align:center;color:#ddd;border:1px solid #3c3c3c;white-space:nowrap}
  .sq{width:20px;height:20px;display:grid;place-items:center;margin:0 1px}
  .play{width:113px;margin:0 15px 0 56px}
  .play .r{width:100%;justify-content:space-between}
  .play .r .sep{margin:0}
  .play .r ui-icon{width:14px;height:14px}
  .big{width:42px;height:46px;display:grid;place-items:center;margin:6px 5px 0 0;flex:none} .big ui-icon{width:28px;height:28px}
  .keys{width:47px;align-items:stretch;gap:3px;margin-right:4px;padding-top:7px} .keys button{height:20px;line-height:18px}
  .filt{width:115px;align-items:stretch;gap:5px;margin-right:10px;padding-top:7px;font-size:12px} .filt drop-down{height:20px;font-size:11px} .filt .r{gap:9px;padding-left:4px} .filt .r button{flex:1;height:20px}
  .nav{display:grid;grid-template-columns:repeat(4,22px);gap:6px 1px;padding-top:9px;align-content:start} .nav ui-icon{width:16px;height:16px;justify-self:center}
  .dot{width:9px;height:9px;border-radius:50%;background:#4fdc43;margin:0 3px}`,
  `<div class="mini"><input aria-label="Macro recorder"><input value="Array modifier r" aria-label="Listener"></div><i class="sep"></i>
   <div class="msg"><div>1 Object Selected</div><div>Click and drag to select and move objects</div></div>
   <div class="col"><div class="r"><ui-icon name="isolate"></ui-icon><ui-icon name="lock"></ui-icon><ui-icon name="absrel"></ui-icon>
     <spin-field label="X:" value="-0.068"></spin-field><spin-field label="Y:" value="0.103"></spin-field><spin-field label="Z:" value="0.0"></spin-field><span>Grid = 10.0</span></div>
     <div class="r"><i class="sep"></i><button class="btn sq" aria-label="Security"><ui-icon name="shield"></ui-icon></button>Enabled:<i class="dot"></i><button class="btn sq" aria-label="Count"><ui-icon name="oval"></ui-icon></button><i class="sep"></i><ui-icon name="cubeo"></ui-icon><span class="tag">Add Time Tag</span></div></div>
   <div class="col play"><div class="r"><ui-icon name="first"></ui-icon><i class="sep"></i><ui-icon name="prev"></ui-icon><ui-icon name="play"></ui-icon><ui-icon name="next"></ui-icon><i class="sep"></i><ui-icon name="last"></ui-icon></div>
     <div class="r"><ui-icon name="keymode"></ui-icon><spin-field value="0"></spin-field><ui-icon name="timecfg"></ui-icon></div></div>
   <button class="btn big" aria-label="Set keys"><ui-icon name="setkey"></ui-icon></button>
   <div class="col keys"><button class="btn">Auto Key</button><button class="btn">Set Key</button></div>
   <div class="col filt"><drop-down label="Key target" value="Selected"></drop-down><div class="r"><ui-icon name="tangent"></ui-icon><button class="btn">Key Filters...</button></div></div>
   <div class="nav">${['zoom', 'zall', 'zextsel', 'zextall', 'zregion', 'hand', 'orbit', 'maxv'].map(n => `<ui-icon name="${n}"></ui-icon>`).join('')}</div>`);

/* ---------- Slate Material Editor ---------- */
const MATS = [['Physical Material'], ['Blend'], ['DirectX Shader'], ['Double Sided'], ['glTF Material', 'bright'], ['Material Switcher', 'bright'], ['Matte/Shadow', 'flat'], ['Multi/Sub-Object'],
  ['PBR Material (Metal/Rough)', 'bright'], ['PBR Material (Spec/Gloss)', 'bright'], ['Shell Material'], ['XRef Material', 'bright']];

define('material-browser', `
  :host{display:flex;flex-direction:column;width:200px;flex:none;padding-top:2px;font-size:11px}
  .dots{margin:0 2px 6px 2px}
  .find{display:flex;align-items:center;gap:5px;padding:0 3px 0 5px;height:18px;margin-bottom:6px}
  .find input{flex:1;height:18px;background:var(--field);border:1px solid #3c3c3c;padding-left:3px}
  .find input::placeholder{color:#d8d8d8;opacity:1}
  .box{flex:1;min-height:0;display:flex;border:1px solid #111;border-width:1px 0 1px 1px}
  .tree{flex:1;min-width:0;overflow:hidden;padding:3px 2px 0 3px}
  .bar{display:flex;align-items:center;height:17px;background:#505050;padding-left:5px;white-space:nowrap}
  .bar i{width:9px;font-style:normal}
  .l1{margin:5px 2px 3px 14px}
  .rule+.l1{margin-top:0}
  .item{display:flex;align-items:center;gap:4px;height:20px;margin-left:25px;padding:0 5px 0 2px;border-bottom:1px solid #111}
  .item span{overflow:hidden;text-overflow:ellipsis;white-space:nowrap;flex:1}
  .rule{height:4px;border-bottom:1px solid #111;margin:0 0 2px 12px}
  .sub{margin-left:25px;height:26px;padding:3px 3px 0 2px;border-bottom:1px solid #111}
  .sub .bar{padding-left:4px} .sub .bar i{width:11px}
  .sb{width:9px;background:#222;border:1px solid #111;border-width:0 1px;padding-top:1px}
  .sb div{height:78px;background:linear-gradient(90deg,#777,#666);border:1px solid #888;display:grid;place-items:center}
  .sb svg{display:block}`,
  `<div class="dots"></div><div class="find"><svg width="12" height="7"><path d="M0 0h12L6 7z" fill="#ddd"/></svg><input placeholder="Search by Name ..." aria-label="Search by Name"></div>
   <div class="box"><div class="tree"><div class="bar"><i>-</i>Materials</div><div class="bar l1"><i>-</i>General</div>
   ${MATS.map(([n, k]) => `<div class="item"><mat-ball kind="${k || ''}"></mat-ball><span>${n}</span></div>`).join('')}
   <div class="rule"></div><div class="bar l1"><i>-</i>Arnold</div>
   ${['AOV', 'Atmosphere', 'Math', 'Surface', 'Utility', 'Volume'].map(n => `<div class="sub"><div class="bar"><i>+</i>${n}</div></div>`).join('')}
   </div><div class="sb"><div><svg width="5" height="7"><path d="M0 .5h5M0 3.5h5M0 6.5h5" stroke="#222"/></svg></div></div></div>`);

define('node-view', `
  :host{display:flex;flex-direction:column;width:396px;flex:none;margin-left:5px;font-size:11px}
  .tabs{display:flex;height:20px;background:#3a3a3a}
  .tabs button{width:46px;background:#444;text-align:center;line-height:24px;height:20px}
  .canvas{flex:1;margin:3px 2px 0 1px;border:1px solid #161616;background:linear-gradient(90deg,#393939 1px,transparent 1px) 9px 7px/20px 20px,linear-gradient(#383838 1px,transparent 1px) 9px 7px/20px 20px,#363636;display:flex;align-items:flex-end;padding:4px 3px 6px}
  .canvas button{width:28px;height:28px;border:1px solid #555;border-radius:4px;background:#444;display:grid;place-items:center}
  .canvas ui-icon{width:16px;height:16px}`,
  `<div class="tabs"><button>View1</button></div><div class="canvas"><button aria-label="Find"><ui-icon name="binoc"></ui-icon></button></div>`);

define('param-pane', `
  :host{display:flex;flex-direction:column;flex:1;padding:2px 1px 0 5px;min-width:0}
  .dots{margin:0 0 4px 1px}
  .nav{height:236px;border:1px solid #3a3a3a;border-right:0;margin-bottom:6px}
  .par{height:22px;background:var(--field);border:1px solid #3c3c3c;margin:3px 0 2px 1px}
  .area{flex:1;display:flex;justify-content:flex-end;padding-right:2px}
  .area i{width:9px;background:#3b3b3b;border-radius:4px;margin-bottom:3px}`,
  `<div class="dots"></div><div class="nav"></div><div class="dots"></div><div class="par"></div><div class="area"><i></i></div>`);

define('foot-icon', `:host{display:block;width:28px}button{width:28px;height:24px;padding-right:3px;display:grid;align-items:center;justify-items:end}ui-icon{width:16px;height:16px}`,
  el => `<button aria-label="${el.getAttribute('icon')}"><ui-icon name="${el.getAttribute('icon')}"></ui-icon></button>`);

define('slate-window', `
  :host{display:flex;flex-direction:column;background:#444;border-radius:8px;overflow:hidden;box-shadow:0 8px 24px rgba(0,0,0,.5),0 0 0 1px #383838;color:#eee}
  .title{display:flex;align-items:center;height:30px;background:linear-gradient(90deg,#eef3fc 60%,#edf3f6);color:#1a1a1a;padding-left:8px}
  .title ui-icon{width:16px;height:16px} .title span{flex:1;padding-left:6px}
  .title button{width:46px;height:30px;display:grid;place-items:center;margin-bottom:1px}
  .title button ui-icon{width:24px;height:24px}
  menu-strip{--pad:12px;height:20px;padding-top:2px;background:linear-gradient(#484848,#575757);border-bottom:1px solid #111;font-size:11px}
  .tools{display:flex;align-items:center;gap:2px;height:32px}
  .body{flex:1;display:flex;min-height:0}
  .foot{display:flex;align-items:center;height:28px;padding:1px 0 0 3px}
  .foot .sp{flex:1}
  .foot drop-down{width:58px;height:21px;margin-right:1px;font-size:11px}`,
  `<div class="title"><ui-icon name="logo"></ui-icon><span>Slate Material Editor</span><button aria-label="Minimize"><ui-icon name="min"></ui-icon></button><button aria-label="Maximize"><ui-icon name="max"></ui-icon></button><button aria-label="Close"><ui-icon name="close"></ui-icon></button></div>
   <menu-strip items="Modes|Material|Edit|Select|View|Options|Tools|Utilities"></menu-strip>
   <div class="tools"><tool-sep grip></tool-sep>${['arrow*', '-', 'dropper', 'put', 'assign', '-', 'trash', '-', 'moveKids', 'hide', 'shade', 'bg', '-', 'zero^', '-', 'layAll^', 'layKid', '-', 'browser*', 'editor*', '-', 'pick'].map(t => t === '-' ? '<tool-sep></tool-sep>' : `<tool-button small icon="${t.replace(/[*^]/g, '')}"${t.includes('*') ? ' on' : ''}${t.includes('^') ? ' fly' : ''}></tool-button>`).join('')}</div>
   <div class="body"><material-browser></material-browser><node-view></node-view><param-pane></param-pane></div>
   <div class="foot"><tool-button tiny on icon="pot"></tool-button><span class="sp"></span><drop-down label="Zoom" value="100 %"></drop-down>${['hand', 'zoom', 'zregion', 'zext', 'zextsel', 'panto'].map(n => `<foot-icon icon="${n}"></foot-icon>`).join('')}</div>`);

/* ---------- context menus ---------- */
define('context-menu', `
  :host{display:block;background:#505050;border:1px solid #404040;box-shadow:3px 3px 3px rgba(0,0,0,.55);font-size:11px;color:#f0f0f0}
  ul{list-style:none;margin:0;padding:0}
  a{display:flex;align-items:center;height:23px;padding:1px 6px 0 24px;white-space:nowrap}
  a.ic{padding-left:5px;gap:3px}
  a span{flex:1}
  a.on{background:var(--blue)}
  hr{margin:2px 0 1px 3px;border:0;border-top:1px solid #6a6a6a}`,
  el => `<ul>${(el.hasAttribute('materials') ? MATS.map(m => m[0]) : el.getAttribute('items').split('|')).map((t, i) => {
    if (t === '-') return '<li><hr></li>';
    const sub = t.endsWith('>'), mat = el.hasAttribute('materials');
    return `<li><a href="#" class="${i ? '' : 'on'}${mat ? ' ic' : ''}">${mat ? `<mat-ball kind="${MATS[i][1] || ''}"></mat-ball>` : ''}<span>${t.replace('>', '')}</span>${sub ? '<svg width="5" height="8"><path d="M0 0l5 4-5 4z" fill="#ddd"/></svg>' : ''}</a></li>`;
  }).join('')}</ul>`);

define('max-app', `
  :host{display:flex;flex-direction:column;height:100vh;position:relative;overflow:hidden}
  .main{flex:1;display:flex;min-height:0}
  scene-explorer{margin-right:1px}
  command-panel{margin-left:1px}
  slate-window{position:absolute;left:210px;top:125px;width:972px;height:604px}
  context-menu{position:absolute;top:402px}
  .m1{left:622px;width:154px}.m2{left:778px;width:114px}.m3{left:894px;width:211px}`,
  `<app-header></app-header><main-toolbar></main-toolbar><ribbon-bar></ribbon-bar>
   <div class="main"><layout-strip></layout-strip><scene-explorer></scene-explorer><view-port></view-port><command-panel></command-panel></div>
   <time-line></time-line><status-bar></status-bar>
   <slate-window></slate-window>
   <context-menu class="m1" items="Materials&gt;|Maps&gt;|Controllers&gt;|Sample Slots&gt;|-|Unhide All Children|Hide All Children"></context-menu>
   <context-menu class="m2" items="General&gt;|Arnold&gt;"></context-menu>
   <context-menu class="m3" materials></context-menu>`);
</script>
</body>
</html>
